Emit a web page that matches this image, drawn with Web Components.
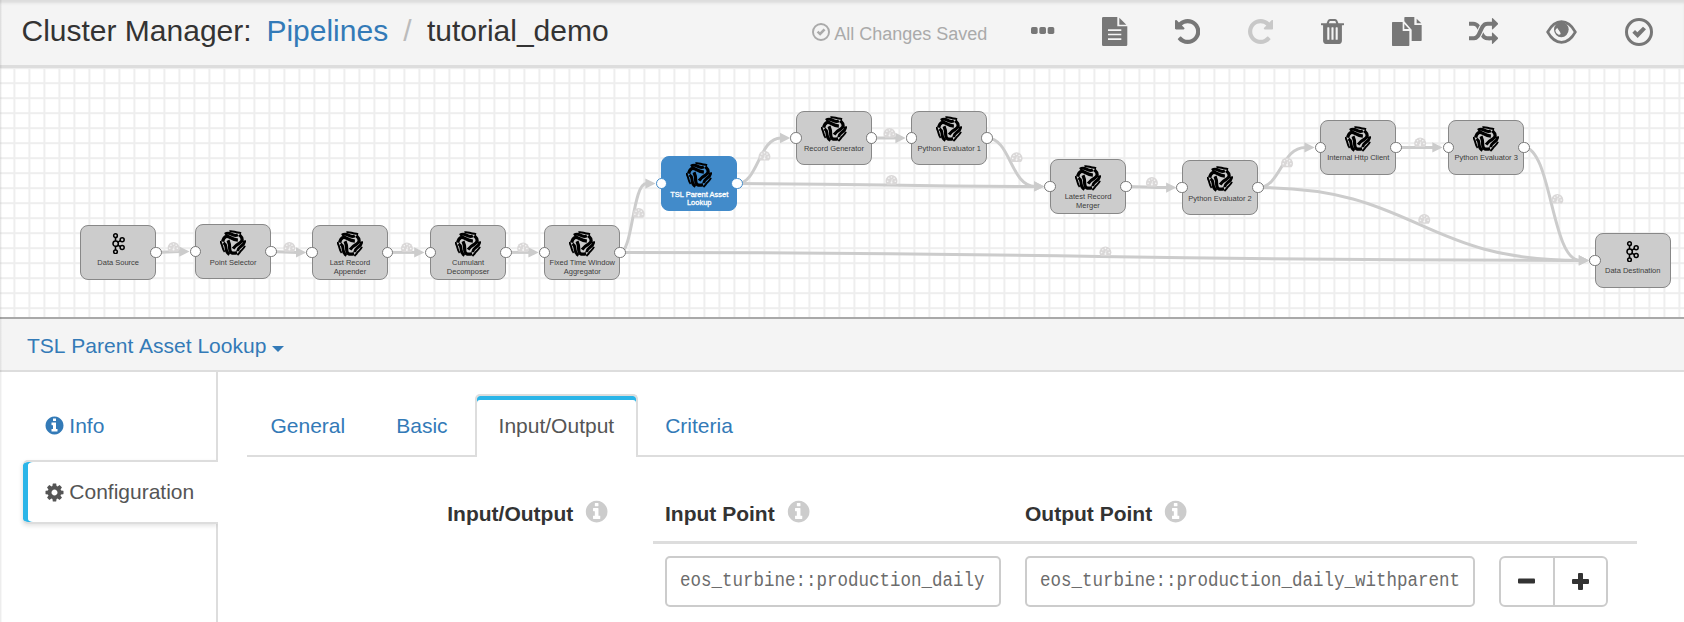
<!DOCTYPE html>
<html lang="en">
<head>
<meta charset="utf-8">
<title>Cluster Manager</title>
<style>
html,body{margin:0;padding:0;height:622px;overflow:hidden;background:#fff}
body{font-family:"Liberation Sans",Arial,sans-serif;font-size:21px;color:#333}
</style>
</head>
<body>
<cluster-app></cluster-app>
<script>
const ICONS={
info:{v:'0 0 1792 1792',d:'M1152 1376v-160q0-14-9-23t-23-9h-96v-512q0-14-9-23t-23-9h-320q-14 0-23 9t-9 23v160q0 14 9 23t23 9h96v320h-96q-14 0-23 9t-9 23v160q0 14 9 23t23 9h448q14 0 23-9t9-23zm-128-896v-160q0-14-9-23t-23-9h-192q-14 0-23 9t-9 23v160q0 14 9 23t23 9h192q14 0 23-9t9-23zm640 416q0 209-103 385.5t-279.5 279.5-385.5 103-385.5-103-279.5-279.5-103-385.5 103-385.5 279.5-279.5 385.5-103 385.5 103 279.5 279.5 103 385.5z'},
cog:{v:'0 0 1792 1792',d:'M1152 896q0-106-75-181t-181-75-181 75-75 181 75 181 181 75 181-75 75-181zm512-109v222q0 12-8 23t-20 13l-185 28q-19 54-39 91 35 50 107 138 10 12 10 25t-9 23q-27 37-99 108t-94 71q-12 0-26-9l-138-108q-44 23-91 38-16 136-29 186-7 28-36 28h-222q-14 0-24.5-8.5t-11.5-21.5l-28-184q-49-16-90-37l-141 107q-10 9-25 9-14 0-25-11-126-114-165-168-7-10-7-23 0-12 8-23 15-21 51-66.5t54-70.5q-27-50-41-99l-183-27q-13-2-21-12.5t-8-23.5v-222q0-12 8-23t19-13l186-28q14-46 39-92-40-57-107-138-10-12-10-24 0-10 9-23 26-36 98.5-107.5t94.5-71.5q13 0 26 10l138 107q44-23 91-38 16-136 29-186 7-28 36-28h222q14 0 24.5 8.5t11.5 21.5l28 184q49 16 90 37l142-107q9-9 24-9 13 0 25 10 129 119 165 170 7 8 7 22 0 12-8 23-15 21-51 66.5t-54 70.5q26 50 41 98l183 28q13 2 21 12.5t8 23.5z'},
undo:{v:'128 128 1536 1536',d:'M1664 896q0 156-61 298t-164 245-245 164-298 61q-172 0-327-72.5t-264-204.5q-7-10-6.5-22.5t8.5-20.5l137-138q10-9 25-9 16 2 23 12 73 95 179 147t225 52q104 0 198.5-40.5t163.5-109.5 109.5-163.5 40.5-198.5-40.5-198.5-109.5-163.5-163.5-109.5-198.5-40.5q-98 0-188 35.5t-160 101.5l137 138q31 30 14 69-17 40-59 40h-448q-26 0-45-19t-19-45v-448q0-42 40-59 39-17 69 14l130 129q107-101 244.5-156.5t284.5-55.5q156 0 298 61t245 164 164 245 61 298z'},
redo:{v:'128 128 1536 1536',d:'M1664 256v448q0 26-19 45t-45 19h-448q-42 0-59-40-17-39 14-69l138-138q-148-137-349-137-104 0-198.5 40.5t-163.5 109.5-109.5 163.5-40.5 198.5 40.5 198.5 109.5 163.5 163.5 109.5 198.5 40.5q119 0 225-52t179-147q7-10 23-12 15 0 25 9l137 138q9 8 9.5 20.5t-7.5 22.5q-109 132-264 204.5t-327 72.5q-156 0-298-61t-245-164-164-245-61-298 61-298 164-245 245-164 298-61q147 0 284.5 55.5t244.5 156.5l130-129q29-31 70-14 39 17 39 59z'},
trash:{v:'192 128 1408 1536',d:'M704 1376v-704q0-14-9-23t-23-9h-64q-14 0-23 9t-9 23v704q0 14 9 23t23 9h64q14 0 23-9t9-23zm256 0v-704q0-14-9-23t-23-9h-64q-14 0-23 9t-9 23v704q0 14 9 23t23 9h64q14 0 23-9t9-23zm256 0v-704q0-14-9-23t-23-9h-64q-14 0-23 9t-9 23v704q0 14 9 23t23 9h64q14 0 23-9t9-23zm-544-992h448l-48-117q-7-9-17-11h-317q-10 2-17 11zm928 32v64q0 14-9 23t-23 9h-96v948q0 83-47 143.5t-113 60.5h-832q-66 0-113-58.5t-47-141.5v-952h-96q-14 0-23-9t-9-23v-64q0-14 9-23t23-9h309l70-167q15-37 54-63t79-26h320q40 0 79 26t54 63l70 167h309q14 0 23 9t9 23z'},
random:{v:'0 32 1792 1600',d:'M666 481q-60 92-137 273-22-45-37-72.5t-40.5-63.5-51-56.5-63-35-81.5-14.5h-224q-14 0-23-9t-9-23v-192q0-14 9-23t23-9h224q250 0 410 225zm1126 799q0 14-9 23l-320 320q-9 9-23 9-13 0-22.5-9.5t-9.5-22.5v-192q-32 0-85 .5t-81 1-73-1-71-5-64-10.5-63-18.5-58-28.5-59-40-55-53.5-56-69.5q59-93 136-273 22 45 37 72.5t40.5 63.5 51 56.5 63 35 81.5 14.5h256v-192q0-14 9-23t23-9q12 0 24 10l319 319q9 9 9 23zm0-896q0 14-9 23l-320 320q-9 9-23 9-13 0-22.5-9.5t-9.5-22.5v-192h-256q-48 0-87 15t-69 45-51 61.5-45 77.5q-32 62-78 171-29 66-49.5 111t-54 105-64 100-74 83-90 68.5-106.5 42-128 16.5h-224q-14 0-23-9t-9-23v-192q0-14 9-23t23-9h224q48 0 87-15t69-45 51-61.5 45-77.5q32-62 78-171 29-66 49.500-111t54-105 64-100 74-83 90-68.5 106.5-42 128-16.5h256v-192q0-14 9-23t23-9q12 0 24 10l319 319q9 9 9 23z'},
dots:{v:'0 0 70 21',m:'<rect width="20" height="21" rx="5"/><rect x="25" width="20" height="21" rx="5"/><rect x="50" width="20" height="21" rx="5"/>'},
file:{v:'0 0 76 87',m:'<path fill-rule="evenodd" d="M4 0H46V28H76V83a4 4 0 0 1-4 4H4a4 4 0 0 1-4-4V4A4 4 0 0 1 4 0ZM18 37V42H58V37ZM18 50V55H58V50ZM18 64V69H58V64Z"/><path d="M52 2L73 23H52Z"/>'},
copy:{v:'0 0 90 87',m:'<path d="M2 15H32V42H52V85a2 2 0 0 1-2 2H2a2 2 0 0 1-2-2V17a2 2 0 0 1 2-2ZM37 21L51 36H37Z"/><path d="M39 0H67V24H89V70a2 2 0 0 1-2 2H59V38L37 13V2a2 2 0 0 1 2-2ZM74 5L88 19H74Z"/>'},
eye:{v:'0 0 93 70',m:'<path fill="none" stroke="currentColor" stroke-width="8" d="M5 35Q22 5 46.500 5T88 35Q71 65 46.500 65T5 35Z"/><circle cx="46" cy="28" r="22"/><path d="M28 31Q30 23 36 24L44 37Q45 44 38 43Q30 41 28 31Z" fill="#f4f4f4"/><path d="M35 25L45 39L49 35L39 22Z"/>'},
check:{v:'0 0 84 84',m:'<circle cx="42" cy="42" r="37.500" fill="none" stroke="currentColor" stroke-width="9"/><path d="M22 44L30 36L37 43L54 26L63 34L38 60Z"/>'},
caret:{v:'0 0 36 19',m:'<path d="M0 0H36L18 19Z"/>'},
minus:{v:'0 0 17 17',m:'<rect y="5.500" width="17" height="5" rx="1"/>'},
plus:{v:'0 0 17 17',m:'<path d="M1 6H6V1q0-1 1-1h3q1 0 1 1V6h5q1 0 1 1v3q0 1-1 1H11v5q0 1-1 1H7q-1 0-1-1V11H1q-1 0-1-1V7q0-1 1-1Z"/>'},
kafka:{v:'0 0 39 65',m:'<g fill="none" stroke="#000" stroke-width="4.600"><path d="M10.500 12V24M10.500 39V51M17 28L25 23M17 36L25 41"/><circle cx="10.500" cy="8" r="5.500"/><circle cx="11" cy="32" r="8"/><circle cx="10.500" cy="56.500" r="5.500"/><circle cx="30.500" cy="20.500" r="6"/><circle cx="30.500" cy="43.500" r="6"/></g>'},
turbine:{v:'-40 -40 80 80',m:'<g fill="none" stroke="#000">'+[0,120,240].map(a=>'<g transform="rotate('+a+')"><path stroke-width="10" d="M-32-4C-28-21-19-23-11-18S3-10 15-9"/><path stroke-width="9" d="M-25-27C-14-34-7-28 0-25S9-22 15-25"/><path stroke-width="6" d="M-11-36C-2-38 4-34 10-33S19-32 25-30"/></g>').join('')+'</g>'}
};
class UiIcon extends HTMLElement{
connectedCallback(){
const i=ICONS[this.getAttribute('name')];
(this.shadowRoot||this.attachShadow({mode:'open'})).innerHTML='<style>:host{display:block;flex:none}svg{display:block;width:100%;height:100%;fill:currentColor}</style><svg viewBox="'+i.v+'" preserveAspectRatio="none">'+(i.m||'<path d="'+i.d+'"/>')+'</svg>';
}}
customElements.define('ui-icon',UiIcon);

function define(name,html){
const t=document.createElement('template');t.innerHTML=html;
customElements.define(name,class extends HTMLElement{constructor(){super();this.attachShadow({mode:'open'}).append(t.content.cloneNode(true));}});
}

define('app-header',`<style>
:host{display:flex;align-items:flex-start;box-sizing:border-box;height:68px;background:#f4f4f4;border-bottom:3px solid #ddd;box-shadow:inset 0 4px 3px -1px #dcdcdc;padding:0 31.500px 0 21.500px}
.title{font-size:30px;line-height:60px;white-space:pre;display:flex;padding-top:1px}
.title a{color:#337ab7;margin-left:14.800px}.title i{font-style:normal;color:#bbb;margin:0 15.200px}
.saved{margin-left:auto;display:flex;align-items:center;font-size:18px;line-height:20px;color:#aaa;margin-top:24px}
.saved ui-icon{width:18px;height:18px;margin:-4px 4px 0 0}
nav{display:flex;gap:47.600px;margin-left:44px;height:61px;align-items:center;color:#777}
</style>
<div class="title"><span>Cluster Manager:</span><a>Pipelines</a><i>/</i><span>tutorial_demo</span></div>
<div class="saved"><ui-icon name="check"></ui-icon><span>All Changes Saved</span></div>
<nav>
<ui-icon name="dots" style="width:23.300px;height:7px"></ui-icon>
<ui-icon name="file" style="width:25.300px;height:29px;margin-top:2px"></ui-icon>
<ui-icon name="undo" style="width:25.300px;height:25px;margin-top:2px"></ui-icon>
<ui-icon name="redo" style="width:25.300px;height:25px;margin-top:2px;color:#c8c8c8"></ui-icon>
<ui-icon name="trash" style="width:23px;height:25px;margin-top:2px"></ui-icon>
<ui-icon name="copy" style="width:30px;height:29px;margin-top:2px"></ui-icon>
<ui-icon name="random" style="width:29.200px;height:26px;margin-top:1px"></ui-icon>
<ui-icon name="eye" style="width:31px;height:24px;margin-top:2px"></ui-icon>
<ui-icon name="check" style="width:28px;height:28px;margin-top:2px"></ui-icon>
</nav>`);

class PipelineNode extends HTMLElement{
connectedCallback(){
const k=this.getAttribute('kind')==='kafka',ends=this.getAttribute('ports')||'both';
this.attachShadow({mode:'open'}).innerHTML=`<style>
:host{position:absolute;width:75.800px;height:54.400px;color:#3c3c3c}
.box{position:absolute;inset:0;box-sizing:border-box;border:1px solid #888;border-radius:8px;background:#ccc;display:flex;flex-direction:column;align-items:center}
ui-icon{margin-top:${k?'6.500px':'4.500px'};width:${k?'13px':'26px'};height:${k?'21.700px':'26px'}}
.l{position:absolute;top:34.300px;left:0;right:0;text-align:center;font-size:7.500px;line-height:8.100px;white-space:pre-line}
b{position:absolute;box-sizing:border-box;width:11.500px;height:11.500px;border:1px solid #777;border-radius:50%;background:#fff;top:21.400px;left:-5.700px}
b.o{left:auto;right:-5.700px}
:host([selected]) .box{background:#428bca;border-color:#428bca}:host([selected]) .l{color:#fff;-webkit-text-stroke:.3px #fff}:host([selected]) b{border-color:#428bca}
</style><div class="box"><ui-icon name="${k?'kafka':'turbine'}"></ui-icon></div><div class="l"><slot></slot></div>${ends!=='out'?'<b></b>':''}${ends!=='in'?'<b class="o"></b>':''}`;
}}
customElements.define('pipeline-node',PipelineNode);

const NODES=[['Data Source',80.3,225.2,'kafka','out'],['Point Selector',195.2,224.4],['Last Record\nAppender',312,225.2],['Cumulant\nDecomposer',430.2,225.2],['Fixed Time Window\nAggregator',544.4,225.2],['TSL Parent Asset\nLookup',661.3,156.4],['Record Generator',796,110.8],['Python Evaluator 1',911.4,110.8],['Latest Record\nMerger',1050.1,159.2],['Python Evaluator 2',1182.1,160.4],['Internal Http Client',1320.4,120.2],['Python Evaluator 3',1448.3,120.2],['Data Destination',1594.8,233.2,'kafka','in']];
const EDGES=[[0,1],[1,2],[2,3],[3,4],[4,5],[4,12],[5,6],[5,8],[6,7],[7,8],[8,9],[9,10],[9,12],[10,11],[11,12]];
const TOP=68;
class PipelineCanvas extends HTMLElement{
connectedCallback(){
let e='',g='';
for(const [a,b] of EDGES){
const x1=NODES[a][1]+75.6,y1=NODES[a][2]+27.2-TOP,x2=NODES[b][1]-16,y2=NODES[b][2]+27.2-TOP,m=(x1+x2)/2,my=(y1+y2)/2;
e+=`<path d="M${x1} ${y1}C${m} ${y1} ${m} ${y2} ${x2+1} ${y2}" fill="none" stroke="#ccc" stroke-width="3"/><path d="M${x2} ${y2-5.2}L${x2+10.3} ${y2}L${x2} ${y2+5.2}Z" fill="#ccc"/>`;
g+=`<g transform="translate(${m} ${my-10})"><path d="M1.500 9.700Q0 8 0 6A6 6 0 1 1 12 6Q12 8 10.500 9.700Z" fill="#dad8d8"/><g fill="#f6f6f6"><circle cx="2.200" cy="6.200" r=".8"/><circle cx="3.400" cy="3.300" r=".8"/><circle cx="6" cy="2" r=".8"/><circle cx="8.600" cy="3.300" r=".8"/><circle cx="9.800" cy="6.200" r=".8"/><circle cx="6" cy="7.600" r="1"/></g><path d="M6 7.400L6.700 4.200" stroke="#f6f6f6" stroke-width=".7"/></g>`;
}
this.attachShadow({mode:'open'}).innerHTML=`<style>
:host{display:block;position:relative;height:249px;border-bottom:2px solid #a9a9a9;overflow:hidden;background-color:#fff;background-image:linear-gradient(90deg,#eee 1.700px,transparent 1.700px),linear-gradient(#eee 1.700px,transparent 1.700px);background-size:15px 15px;background-position:13.400px 0,0 14.200px}
svg{position:absolute;left:0;top:0}</style><svg width="1684" height="249">${e}${g}</svg>`+NODES.map((n,i)=>`<pipeline-node kind="${n[3]||'eval'}" ports="${n[4]||'both'}" ${i===5?'selected':''} style="left:${n[1]}px;top:${n[2]-TOP}px">${n[0]}</pipeline-node>`).join('');
}}
customElements.define('pipeline-canvas',PipelineCanvas);

define('side-tab',`<style>
:host{display:flex;align-items:center;box-sizing:border-box;height:63px;margin-left:22.500px;padding:0 0 0 21px;color:#337ab7;border-right:2px solid #ddd}
::slotted(ui-icon){width:21px;height:21px;margin-right:4.800px}
:host([active]){color:#555;background:#fff;height:64px;border:2px solid #ddd;border-right:0;border-left:0;border-radius:5px 0 0 5px;box-shadow:inset 5px 0 #2bb5e8,-1px 2px 4px rgba(0,0,0,.11);clip-path:inset(-4px 0 -6px -6px)}
</style><slot></slot>`);
define('side-nav',`<style>
:host{display:flex;flex-direction:column;width:218px;flex:none;box-sizing:border-box}
.pad{border-right:2px solid #ddd}.a{height:22px}.g{height:3px}.b{flex:1}
</style><div class="pad a"></div><slot name="first"></slot><div class="pad g"></div><slot></slot><div class="pad b"></div>`);

define('tab-item',`<style>
:host{display:block;box-sizing:border-box;height:63px;padding:20px 24px 0;line-height:24px;margin-right:3px;color:#337ab7}
:host([active]){color:#555;background:#fff;border:2px solid #ddd;border-bottom:0;border-radius:5px 5px 0 0;padding:18px 22px 0;box-shadow:inset 0 4px #2bb5e8;margin:0 3px 0 0}
</style><slot></slot>`);
define('tab-bar',`<style>
:host{display:flex;height:63px;background:linear-gradient(#ddd,#ddd) 0 100%/100% 2px no-repeat}
</style><slot></slot>`);

define('field-label',`<style>
:host{display:flex;font-weight:bold;line-height:24px;color:#333;white-space:nowrap}
ui-icon{width:25.300px;height:25.300px;color:#ccc;margin:-3px 0 0 11px}
</style><slot></slot><ui-icon name="info"></ui-icon>`);
define('text-field',`<style>
:host{display:block;box-sizing:border-box;height:51px;border:2px solid #ccc;border-radius:5px;padding:0 13px;line-height:45px;font-family:"Liberation Mono",monospace;font-size:17.500px;color:#6c6c6c;white-space:nowrap}
span{display:block;transform:scaleY(1.140)}
</style><span><slot></slot></span>`);
define('row-buttons',`<style>
:host{display:flex;box-sizing:border-box;width:109px;height:51px;border:2px solid #ccc;border-radius:6px;color:#333}
div{flex:1;display:flex;align-items:center;justify-content:center}div+div{border-left:2px solid #ccc}
ui-icon{width:17px;height:17px}
</style><div><ui-icon name="minus"></ui-icon></div><div><ui-icon name="plus"></ui-icon></div>`);
define('point-table',`<style>
:host{display:block;width:984px}
.h,.r{display:grid;grid-template-columns:336px 450px 109px;column-gap:24px;padding-left:12px}
.h{height:39px;border-bottom:3px solid #ddd}.r{padding-top:12px}
</style>
<div class="h"><field-label>Input Point</field-label><field-label>Output Point</field-label></div>
<div class="r"><text-field>eos_turbine::production_daily</text-field><text-field>eos_turbine::production_daily_withparent</text-field><row-buttons></row-buttons></div>`);

define('detail-panel',`<style>
:host{display:flex;flex-direction:column;height:303px}
header{box-sizing:border-box;height:53px;background:#f4f4f4;border-bottom:2px solid #ddd;padding:14.500px 0 0 27px;line-height:24px;color:#337ab7;display:flex;font-kerning:none}
header ui-icon{width:12px;height:6px;margin:12px 0 0 6px}
.body{display:flex;flex:1;min-height:0}
main{flex:1;padding:22px 0 0 28.500px}
.form{display:flex;margin-top:45px}
.lab{width:364px;padding-right:1px;box-sizing:border-box;display:flex;justify-content:flex-end}
point-table{margin:0 0 0 42.500px}
</style>
<header><span>TSL Parent Asset Lookup</span><ui-icon name="caret"></ui-icon></header>
<div class="body">
<side-nav><side-tab slot="first"><ui-icon name="info"></ui-icon><span>Info</span></side-tab><side-tab active><ui-icon name="cog"></ui-icon><span>Configuration</span></side-tab></side-nav>
<main><tab-bar><tab-item>General</tab-item><tab-item>Basic</tab-item><tab-item active>Input/Output</tab-item><tab-item>Criteria</tab-item></tab-bar>
<div class="form"><div class="lab"><field-label>Input/Output</field-label></div><point-table></point-table></div></main>
</div>`);
define('cluster-app',`<style>:host{display:block;position:relative;width:1684px;height:622px;overflow:hidden}
.edge{position:absolute;left:0;top:0;width:2px;height:622px;background:linear-gradient(90deg,rgba(0,0,0,.09),rgba(0,0,0,.01))}</style><app-header></app-header><pipeline-canvas></pipeline-canvas><detail-panel></detail-panel><div class="edge"></div>`);
</script>
</body>
</html>
